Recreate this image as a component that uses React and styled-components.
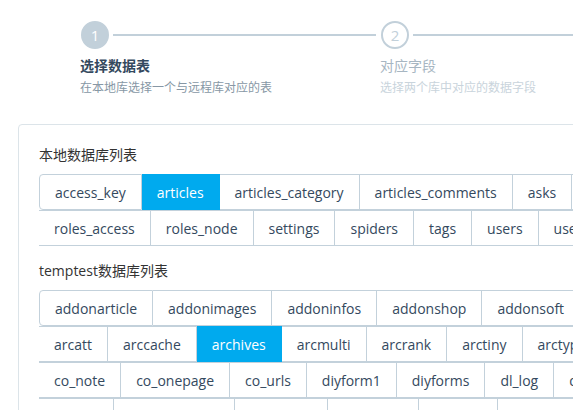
import React from 'react';
import styled, { createGlobalStyle } from 'styled-components';

const GlobalStyle = createGlobalStyle`
  html, body {
    margin: 0;
    padding: 0;
    background: #fff;
    overflow: hidden;
  }
  body {
    font-family: "Open Sans", "Noto Sans CJK SC", sans-serif;
  }
`;

const Page = styled.div`
  width: 1000px;
  padding: 21px 0 0 18px;
`;

const Steps = styled.div`
  display: flex;
  padding-left: 62px;
`;

const Step = styled.div`
  width: 300px;
  flex-shrink: 0;
`;

const StepHead = styled.div`
  display: flex;
  align-items: center;
`;

const Circle = styled.div`
  width: 28px;
  height: 28px;
  margin-left: 1px;
  box-sizing: border-box;
  border-radius: 50%;
  display: flex;
  align-items: center;
  justify-content: center;
  font-size: 15px;
  font-family: "Open Sans", sans-serif;
  background: ${(props) => (props.active ? '#c2d0da' : '#fff')};
  border: 2px solid #c2d0da;
  color: ${(props) => (props.active ? '#fff' : '#c2d0da')};
`;

const Line = styled.div`
  flex: 1;
  height: 2px;
  margin: 0 4px;
  background: #c2d0da;
`;

const StepTitle = styled.div`
  margin-top: 6px;
  font-size: 14px;
  line-height: 20px;
  font-weight: ${(props) => (props.active ? 700 : 400)};
  color: ${(props) => (props.active ? '#34495e' : '#a7b6c2')};
  font-family: "Noto Sans CJK SC", sans-serif;
`;

const StepDesc = styled.div`
  margin-top: 3px;
  font-size: 12px;
  line-height: 18px;
  color: ${(props) => (props.active ? '#8797a5' : '#c9d4dc')};
  font-family: "Noto Sans CJK SC", sans-serif;
`;

const Card = styled.div`
  margin-top: 28px;
  border: 1px solid #dce4e9;
  border-radius: 4px;
  padding: 20px 20px 40px;
  min-height: 400px;
`;

const Label = styled.div`
  font-size: 14px;
  line-height: 20px;
  color: #333;
  margin-bottom: 9px;
  font-family: "Open Sans", "Noto Sans CJK SC", sans-serif;
`;

const Group = styled.div`
  margin-bottom: 15px;
`;

const Row = styled.div`
  display: flex;
  flex-wrap: nowrap;
`;

const Btn = styled.div`
  flex-shrink: 0;
  box-sizing: border-box;
  height: 36px;
  padding: 0 15px;
  display: flex;
  align-items: center;
  font-size: 14px;
  color: #34495e;
  white-space: nowrap;
  border: 1px solid #c3d1db;
  border-left: ${(props) => (props.first ? '1px solid #c3d1db' : 'none')};
  border-radius: ${(props) => (props.first ? '4px 0 0 4px' : '0')};
  background: ${(props) => (props.active ? '#00aaee' : '#fff')};
  ${(props) => props.active && `
    color: #fff;
    border-color: #00aaee;
  `}
`;

const localRows = [
  ['access_key', 'articles', 'articles_category', 'articles_comments', 'asks', 'attachment'],
  ['roles_access', 'roles_node', 'settings', 'spiders', 'tags', 'users', 'users_group'],
];

const remoteRows = [
  ['addonarticle', 'addonimages', 'addoninfos', 'addonshop', 'addonsoft', 'addonspec'],
  ['arcatt', 'arccache', 'archives', 'arcmulti', 'arcrank', 'arctiny', 'arctype'],
  ['co_note', 'co_onepage', 'co_urls', 'diyform1', 'diyforms', 'dl_log', 'downloads'],
  ['erradd', 'member_flink', 'keywords', 'feedback', 'mtypes', 'homepage'],
];

const TableGroup = ({ rows, active }) => (
  <Group>
    {rows.map((row, r) => (
      <Row key={r}>
        {row.map((name, i) => (
          <Btn key={name} first={r === 0 && i === 0} active={name === active}>
            {name}
          </Btn>
        ))}
      </Row>
    ))}
  </Group>
);

const App = () => (
  <Page>
    <GlobalStyle />
    <Steps>
      <Step>
        <StepHead>
          <Circle active>1</Circle>
          <Line />
        </StepHead>
        <StepTitle active>选择数据表</StepTitle>
        <StepDesc active>在本地库选择一个与远程库对应的表</StepDesc>
      </Step>
      <Step>
        <StepHead>
          <Circle>2</Circle>
          <Line />
        </StepHead>
        <StepTitle>对应字段</StepTitle>
        <StepDesc>选择两个库中对应的数据字段</StepDesc>
      </Step>
      <Step>
        <StepHead>
          <Circle>3</Circle>
        </StepHead>
        <StepTitle>完成</StepTitle>
        <StepDesc>完成导入</StepDesc>
      </Step>
    </Steps>
    <Card>
      <Label>本地数据库列表</Label>
      <TableGroup rows={localRows} active="articles" />
      <Label>temptest数据库列表</Label>
      <TableGroup rows={remoteRows} active="archives" />
    </Card>
  </Page>
);

export default App;
